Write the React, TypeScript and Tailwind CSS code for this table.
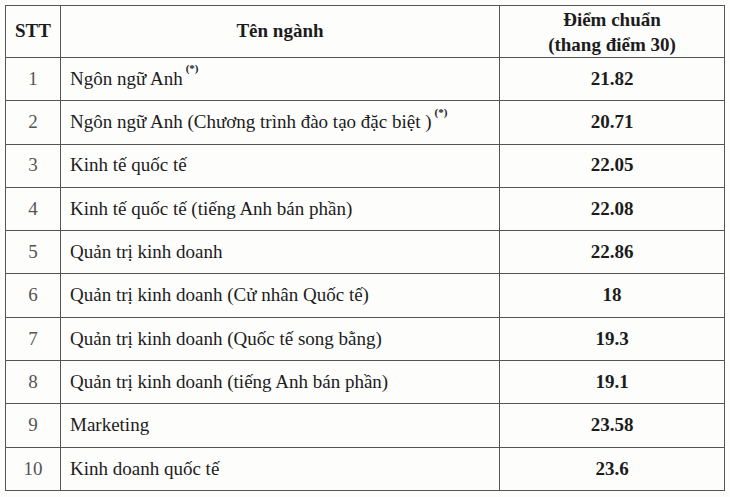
const rows: { no: number; name: string; star?: boolean; score: string }[] = [
  { no: 1, name: "Ngôn ngữ Anh", star: true, score: "21.82" },
  { no: 2, name: "Ngôn ngữ Anh (Chương trình đào tạo đặc biệt )", star: true, score: "20.71" },
  { no: 3, name: "Kinh tế quốc tế", score: "22.05" },
  { no: 4, name: "Kinh tế quốc tế (tiếng Anh bán phần)", score: "22.08" },
  { no: 5, name: "Quản trị kinh doanh", score: "22.86" },
  { no: 6, name: "Quản trị kinh doanh (Cử nhân Quốc tế)", score: "18" },
  { no: 7, name: "Quản trị kinh doanh (Quốc tế song bằng)", score: "19.3" },
  { no: 8, name: "Quản trị kinh doanh (tiếng Anh bán phần)", score: "19.1" },
  { no: 9, name: "Marketing", score: "23.58" },
  { no: 10, name: "Kinh doanh quốc tế", score: "23.6" },
];

export default function App() {
  return (
    <div className="w-[730px] h-[497px] bg-[#fdfdfc] pt-[5px] pl-[5px] font-['Liberation_Serif',serif] text-[#1c1c1c]">
      <table className="w-[719px] border-collapse table-fixed">
        <colgroup>
          <col className="w-[55px]" />
          <col className="w-[439px]" />
          <col className="w-[225px]" />
        </colgroup>
        <thead>
          <tr className="h-[52px] font-bold text-[19px]">
            <th className="border-[1.5px] border-[#555] text-center">STT</th>
            <th className="border-[1.5px] border-[#555] text-center">Tên ngành</th>
            <th className="border-[1.5px] border-[#555] text-center leading-[25px]">
              Điểm chuẩn
              <br />
              (thang điểm 30)
            </th>
          </tr>
        </thead>
        <tbody>
          {rows.map((r) => (
            <tr key={r.no} className="h-[43.3px] text-[19px]">
              <td className="border-[1.5px] border-[#555] text-center text-[#555]">{r.no}</td>
              <td className="border-[1.5px] border-[#555] pl-[9px] whitespace-nowrap">
                {r.name}
                {r.star && <sup className="ml-[3px] text-[11px] font-bold align-[7px]">(*)</sup>}
              </td>
              <td className="border-[1.5px] border-[#555] text-center font-bold">{r.score}</td>
            </tr>
          ))}
        </tbody>
      </table>
    </div>
  );
}
